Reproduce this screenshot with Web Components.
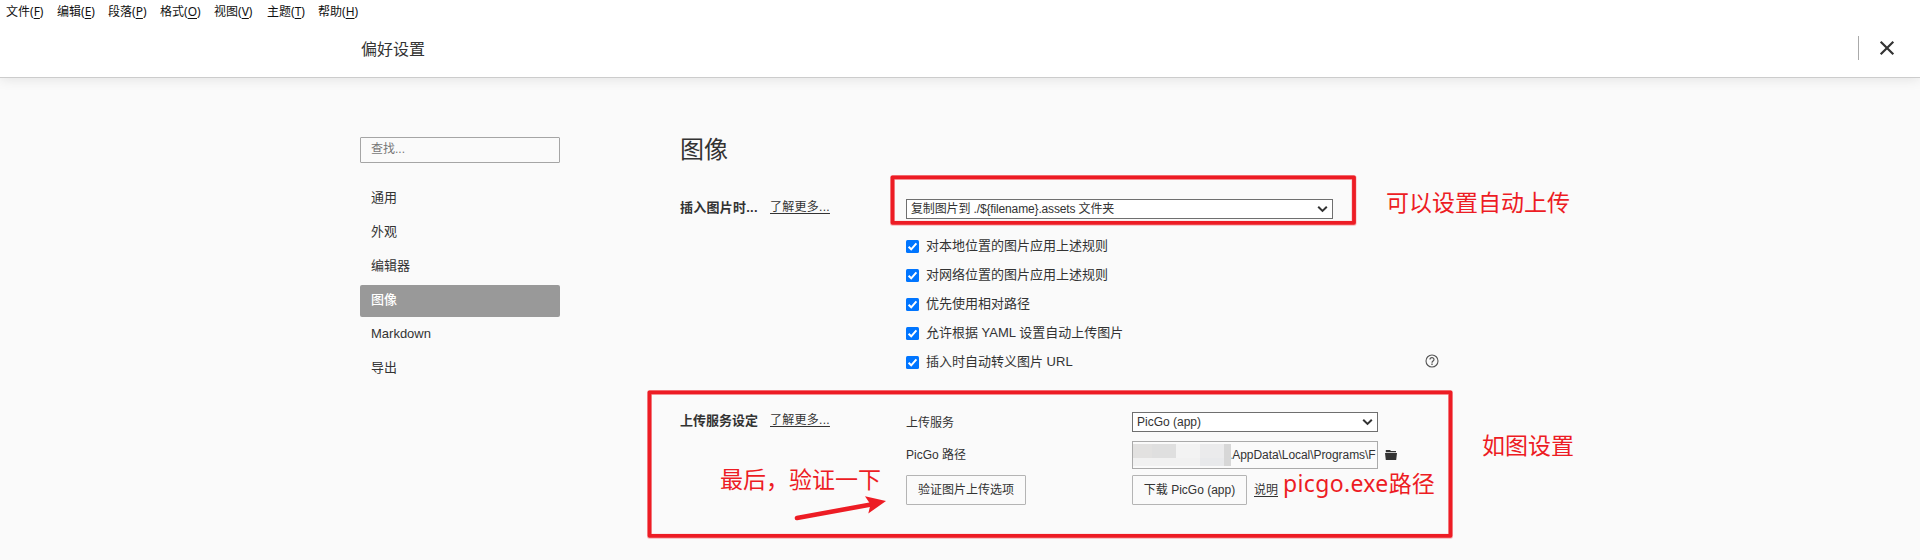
<!DOCTYPE html>
<html lang="zh-CN">
<head>
<meta charset="utf-8">
<title>偏好设置</title>
<style>
html,body{margin:0;height:100%;overflow:hidden}
body{background:#fafafa;color:#333;font:13px/20px "Liberation Sans","Noto Sans CJK SC",sans-serif}
</style>
</head>
<body>
<pref-window></pref-window>
<script>
const define = (name, html, setup) => {
  const t = document.createElement('template');
  t.innerHTML = html;
  customElements.define(name, class extends HTMLElement {
    constructor() {
      super();
      this.attachShadow({mode: 'open'}).append(t.content.cloneNode(true));
    }
    connectedCallback() { if (setup) setup(this, this.shadowRoot); }
  });
};

define('menu-entry', `<style>
:host{display:block;font:12px/24px "Noto Sans","Noto Sans CJK SC",sans-serif;color:#111;white-space:nowrap;width:var(--w,51px);flex:none}
u{text-underline-offset:1.5px;text-decoration-thickness:1px}
</style><slot></slot>(<u></u>)`, (el, r) => {
  r.querySelector('u').textContent = el.getAttribute('key');
  el.style.setProperty('--w', el.getAttribute('w') + 'px');
});

define('menu-bar', `<style>
:host{display:flex;height:24px;padding-left:6px;background:#fff;position:relative;z-index:1}
</style>
<menu-entry key="F" w="51">文件</menu-entry><menu-entry key="E" w="51">编辑</menu-entry><menu-entry key="P" w="52">段落</menu-entry><menu-entry key="O" w="54">格式</menu-entry><menu-entry key="V" w="53">视图</menu-entry><menu-entry key="T" w="51">主题</menu-entry><menu-entry key="H" w="51">帮助</menu-entry>`);

define('title-bar', `<style>
:host{display:flex;align-items:center;height:53px;padding:0 25px 0 361px;background:#fff;border-bottom:1px solid #ccc;box-shadow:0 1px 12px rgba(0,0,0,.1);box-sizing:content-box}
h1{flex:1;margin:0;font-size:16px;line-height:24px;font-weight:400;color:#333;padding-bottom:2px}
i{width:1px;height:24px;background:#aaa;margin:0 20px 5px 0}
svg{display:block;margin-bottom:5px}
</style><h1>偏好设置</h1><i></i>
<svg width="16" height="16" viewBox="0 0 16 16"><path d="M1.7 1.7 14.3 14.3M14.3 1.7 1.7 14.3" stroke="#333" stroke-width="2.2"/></svg>`);

define('search-box', `<style>
:host{display:block;box-sizing:border-box;height:26px;border:1px solid #a5a5a5;border-radius:1px;padding:0 10px;font-size:12px;line-height:23px;color:#777}
</style><slot></slot>`);

define('nav-item', `<style>
:host{display:block;box-sizing:border-box;height:32px;margin-bottom:2px;padding:0 11px;line-height:30px;font-size:13px;border-radius:2px;color:#333}
:host([active]){background:#999;color:#fff;font-weight:500}
</style><slot></slot>`);

define('side-nav', `<style>
:host{display:block;width:200px;flex:none;padding-top:5px}
nav{margin-top:20px}
</style><search-box>查找...</search-box>
<nav><nav-item>通用</nav-item><nav-item>外观</nav-item><nav-item>编辑器</nav-item><nav-item active>图像</nav-item><nav-item>Markdown</nav-item><nav-item>导出</nav-item></nav>`);

define('text-link', `<style>
:host{display:inline-block;font-size:12px;white-space:nowrap;text-decoration:underline;text-underline-offset:2px;text-decoration-thickness:1px;color:#333}
</style><slot></slot>`);

define('drop-down', `<style>
:host{display:flex;align-items:center;justify-content:space-between;box-sizing:border-box;height:20px;border:1px solid #6f6f6f;background:#fff;padding:0 4px;font-size:12px;line-height:18px;white-space:nowrap}
</style><span><slot></slot></span>
<svg width="11" height="8" viewBox="0 0 11 8"><path d="M1.2 1.7 5.5 5.9 9.8 1.7" fill="none" stroke="#333" stroke-width="2"/></svg>`);

define('check-row', `<style>
:host{display:flex;align-items:center;height:29px;font-size:13px}
.box{display:block;margin-right:7px}
span{flex:1;padding-bottom:1px}
</style>
<svg class="box" width="13" height="13" viewBox="0 0 13 13"><rect width="13" height="13" rx="1.5" fill="#0075ff"/><path d="M2.6 6.8 5.2 9.3 10.4 3.3" fill="none" stroke="#fff" stroke-width="2"/></svg>
<span><slot></slot></span><slot name="end"></slot>`);

define('help-icon', `<style>:host{display:block;height:14px;padding-bottom:3px}svg{display:block}</style>
<svg width="14" height="14" viewBox="0 0 14 14" fill="none" stroke="#555"><circle cx="7" cy="7" r="6" stroke-width="1.1"/><path d="M5 5.6C5 3 9 3 9 5.5 9 7 7 7 7 8.7" stroke-width="1.2"/><path d="M7 9.6v1.3" stroke-width="1.3"/></svg>`);

define('push-button', `<style>
:host{display:block;box-sizing:border-box;height:30px;border:1px solid #b4b4b4;border-radius:1px;font-size:12px;line-height:28px;text-align:center;white-space:nowrap;flex:none}
</style><slot></slot>`);

define('path-field', `<style>
:host{display:flex;align-items:center}
.f{box-sizing:border-box;width:246px;height:28px;border:1px solid #aaa;padding-right:2px;display:flex;align-items:center;overflow:hidden;position:relative;font-size:12px;flex:none}
.t{margin-left:96px;white-space:nowrap;line-height:24px;letter-spacing:-.06px}
svg{display:block;flex:none}
.m{position:absolute;left:-1px;top:2px}
.i{margin-left:7px}
</style>
<div class="f"><svg class="m" width="99" height="22" shape-rendering="crispEdges"><path fill="#f1f1f1" d="M0 0h99v22H0z"/><path fill="#e2e1e0" d="M0 0h20v14H0z"/><path fill="#dfdfdf" d="M20 0h24v14H20z"/><path fill="#f3f3f3" d="M44 0h24v14H44z"/><path fill="#ebebec" d="M68 0h24v14H68z"/><path fill="#e8e9eb" d="M68 14h24v8H68z"/><path fill="#d7d7d7" d="M92 0h7v22h-7z"/></svg>
<span class="t">.AppData\\Local\\Programs\\F</span></div>
<svg class="i" width="12" height="10" viewBox="0 0 12 10"><path fill="#333" d="M.8 0h4.2l1 1h5v1.2H.8zM0 3h12l-.8 7H.8z"/></svg>`);

define('setting-group', `<style>
:host{display:grid;grid-template-columns:226px 1fr}
.head{display:flex;line-height:17px}
.head b{width:90px;font-weight:700;font-size:13px;white-space:nowrap}
.head text-link{letter-spacing:.28px}
</style><div class="head"><b></b><text-link>了解更多...</text-link></div><div><slot></slot></div>`, (el, r) => {
  r.querySelector('b').textContent = el.getAttribute('label');
  if (el.hasAttribute('wide')) r.querySelector('b').style.letterSpacing = '.25px';
});

define('image-settings', `<style>
:host{display:block;width:759px}
h2{margin:0 0 31px;font-size:24px;line-height:36px;font-weight:400}
.top{width:427px;margin-bottom:13px;letter-spacing:-.14px}
.up{margin-top:35px}
.rows{display:grid;grid-template-columns:226px 1fr;grid-template-rows:20px 37px 36px;font-size:12px}
.rows .a{line-height:22px}
.rows .b{margin-top:9px;line-height:28px;height:28px}
.c{margin-top:6px;display:flex;align-items:center;gap:7px}
</style>
<h2>图像</h2>
<setting-group label="插入图片时..." wide>
<drop-down class="top">复制图片到 ./\${filename}.assets 文件夹</drop-down>
<check-row>对本地位置的图片应用上述规则</check-row>
<check-row>对网络位置的图片应用上述规则</check-row>
<check-row>优先使用相对路径</check-row>
<check-row>允许根据 YAML 设置自动上传图片</check-row>
<check-row>插入时自动转义图片 URL<help-icon slot="end"></help-icon></check-row>
</setting-group>
<setting-group class="up" label="上传服务设定">
<div class="rows">
<span class="a">上传服务</span><drop-down style="width:246px">PicGo (app)</drop-down>
<span class="b">PicGo 路径</span><path-field class="b"></path-field>
<div class="c"><push-button style="width:120px">验证图片上传选项</push-button></div>
<div class="c"><push-button style="width:115px">下载 PicGo (app)</push-button><text-link>说明</text-link></div>
</div>
</setting-group>`);

/* Red marker notes drawn over the settings page */
define('note-text', `<style>
:host{position:absolute;font:23px/32px "Noto Sans","Noto Sans CJK SC",sans-serif;color:#ed1c24;white-space:nowrap}
</style><slot></slot>`);

define('note-layer', `<style>
:host{position:absolute;inset:0;pointer-events:none}
svg{position:absolute;left:0;top:0}
.l{letter-spacing:.35px}
</style>
<svg width="1920" height="560"><g fill="none" stroke="#ed1c24" stroke-linejoin="round"><g stroke-opacity=".3" stroke-width="5"><rect x="892.5" y="177.5" width="461.5" height="45.8"/><rect x="649.5" y="392.5" width="801" height="143.7"/></g><g stroke-width="3.8"><rect x="892.5" y="177.3" width="461.5" height="45.5"/><rect x="649.5" y="392.3" width="801" height="143.5"/></g></g>
<path d="M797 518 871 504.5" stroke="#ed1c24" stroke-width="4.6" stroke-linecap="round"/><path d="M886 501 865 496.3 870.5 504.5 868.3 513.5z" fill="#ed1c24"/></svg>
<note-text style="left:1386px;top:186px">可以设置自动上传</note-text>
<note-text style="left:1482px;top:429px">如图设置</note-text>
<note-text style="left:720px;top:463px">最后，验证一下</note-text>
<note-text style="left:1283px;top:467px"><span class="l">picgo.exe</span>路径</note-text>`);

define('pref-window', `<style>
:host{display:block;position:relative;width:1920px;height:560px;overflow:hidden;background:#fafafa}
main{display:flex;gap:120px;padding:54px 0 0 360px}
</style>
<menu-bar></menu-bar><title-bar></title-bar>
<main><side-nav></side-nav><image-settings></image-settings></main>
<note-layer></note-layer>`);
</script>
</body>
</html>
